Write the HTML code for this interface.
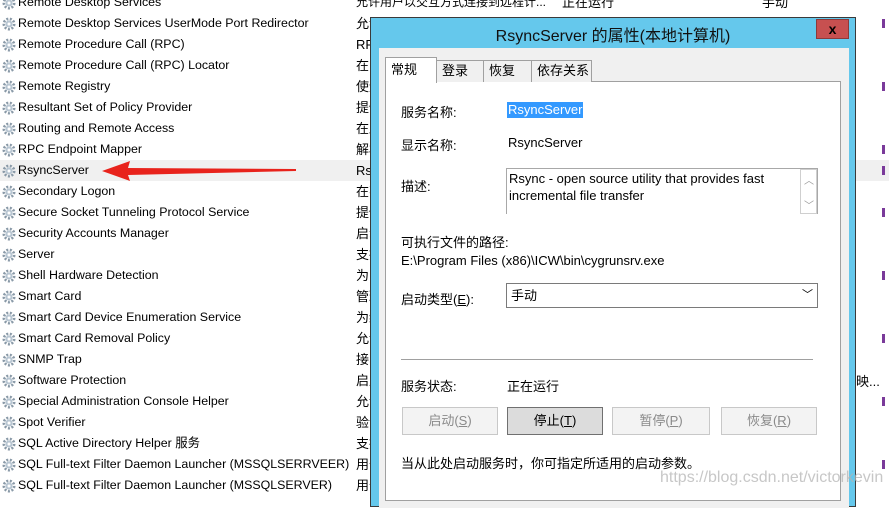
<!DOCTYPE html>
<html><head><meta charset="utf-8"><style>
*{margin:0;padding:0;box-sizing:border-box}
body{width:889px;height:495px;overflow:hidden;background:#fff;position:relative;font-family:"Liberation Sans","Noto Sans CJK SC",sans-serif;font-size:13px;color:#000}
.row{position:absolute;left:0;width:889px;height:21px;line-height:21px;white-space:nowrap}
.row .ic{position:absolute;left:2px;top:4px;width:14px;height:14px}
.row .n{position:absolute;left:18px;font-size:12.4px}
.row .d{position:absolute;left:356px;width:14px;overflow:hidden}
.row .m{position:absolute;left:882px;top:6px;width:3px;height:9px;background:#7a3a9a}
.hl{background:#f0f0f0}
.a{position:absolute}
.dlg{position:absolute;left:370px;top:17px;width:486px;height:490px;background:#65c8ec;border:1px solid #3a3a3a}
.inner{position:absolute;left:8px;top:30px;width:470px;height:460px;background:#f0f0f0}
.title{position:absolute;left:0;top:4px;width:100%;text-align:center;font-size:16px;color:#111}
.close{position:absolute;right:6px;top:1px;width:33px;height:20px;background:#c75050;border:1px solid #8c3a3a;color:#000;font-weight:bold;text-align:center;line-height:18px;font-size:14px}
.tab{position:absolute;top:60px;height:22px;background:#f0f0f0;border:1px solid #a0a0a0;border-bottom:none;font-size:13px;line-height:20px;padding-left:5px}
.btn{position:absolute;top:407px;height:28px;border:1px solid #c8c8c8;background:#f3f3f3;color:#8a8a8a;text-align:center;line-height:26px;font-size:13px}
</style></head><body>

<div id="list"></div>
<script>
var rows=[["Remote Desktop Services",""],["Remote Desktop Services UserMode Port Redirector","允许"],["Remote Procedure Call (RPC)","RPC"],["Remote Procedure Call (RPC) Locator","在 W"],["Remote Registry","使远"],["Resultant Set of Policy Provider","提供"],["Routing and Remote Access","在局"],["RPC Endpoint Mapper","解析"],["RsyncServer","Rsy"],["Secondary Logon","在不"],["Secure Socket Tunneling Protocol Service","提供"],["Security Accounts Manager","启动"],["Server","支持"],["Shell Hardware Detection","为自"],["Smart Card","管理"],["Smart Card Device Enumeration Service","为给"],["Smart Card Removal Policy","允许"],["SNMP Trap","接收"],["Software Protection","启用"],["Special Administration Console Helper","允许"],["Spot Verifier","验证"],["SQL Active Directory Helper 服务","支持"],["SQL Full-text Filter Daemon Launcher (MSSQLSERRVEER)","用于"],["SQL Full-text Filter Daemon Launcher (MSSQLSERVER)","用于"]];
var gear='<svg class="ic" viewBox="0 0 14 14"><circle cx="7" cy="7" r="5.2" fill="none" stroke="#8a9aa8" stroke-width="2.6" stroke-dasharray="2 1.6"/><circle cx="7" cy="7" r="3.6" fill="#b8c6d2"/><circle cx="7" cy="7" r="1.5" fill="#fff"/></svg>';
var h='';
for(var i=0;i<rows.length;i++){var y=-8+21*i;var m=(i%3==1||i==8)?'<span class="m"></span>':'';
h+='<div class="row'+(i==8?' hl':'')+'" style="top:'+y+'px">'+gear+'<span class="n">'+rows[i][0]+'</span><span class="d">'+rows[i][1]+'</span>'+m+'</div>';}
document.getElementById('list').innerHTML=h;
</script>
<div class="a" style="left:356px;top:-8px;line-height:21px;font-size:12px;width:190px;overflow:hidden;white-space:nowrap">允许用户以交互方式连接到远程计...</div>
<div class="a" style="left:562px;top:-8px;line-height:21px">正在运行</div>
<div class="a" style="left:762px;top:-8px;line-height:21px">手动</div>
<div class="a" style="left:856px;top:371px;line-height:21px">映...</div>

<svg class="a" style="left:100px;top:160px" width="200" height="22" viewBox="0 0 200 22">
<polygon points="2,11 30,1 28,8 196,9 196,11 28,15 30,21" fill="#e8231c"/>
</svg>

<div class="dlg">
 <div class="title">RsyncServer 的属性(本地计算机)</div>
 <div class="close">x</div>
 <div class="inner"></div>
</div>
<div class="a" style="left:385px;top:81px;width:456px;height:420px;background:#fff;border:1px solid #a0a0a0"></div>
<div class="tab" style="left:436px;width:48px">登录</div>
<div class="tab" style="left:483px;width:49px">恢复</div>
<div class="tab" style="left:531px;width:61px">依存关系</div>
<div class="tab" style="left:385px;top:57px;height:26px;width:52px;background:#fff;padding-top:2px">常规</div>

<div class="a" style="left:401px;top:102px">服务名称:</div>
<div class="a" style="left:507px;top:102px;background:#3399ff;color:#fff;padding:0 1px;line-height:16px">RsyncServer</div>
<div class="a" style="left:401px;top:135px">显示名称:</div>
<div class="a" style="left:508px;top:135px">RsyncServer</div>
<div class="a" style="left:401px;top:176px">描述:</div>
<div class="a" style="left:506px;top:168px;width:312px;height:46px;border:1px solid #a8a8a8;border-bottom:none"></div>
<div class="a" style="left:509px;top:170px;line-height:17px;width:290px">Rsync - open source utility that provides fast incremental file transfer</div>
<div class="a" style="left:800px;top:169px;width:17px;height:45px;border:1px solid #cfcfcf;background:#fff"></div>
<div class="a" style="left:804px;top:172px;color:#999;font-size:10px">︿</div>
<div class="a" style="left:804px;top:197px;color:#999;font-size:10px">﹀</div>
<div class="a" style="left:401px;top:232px">可执行文件的路径:</div>
<div class="a" style="left:401px;top:253px">E:\Program Files (x86)\ICW\bin\cygrunsrv.exe</div>
<div class="a" style="left:401px;top:289px">启动类型(<u>E</u>):</div>
<div class="a" style="left:506px;top:283px;width:312px;height:25px;border:1px solid #7a7a7a;background:#fff;padding-left:4px;line-height:23px">手动<span style="position:absolute;right:4px;top:0;font-size:11px">﹀</span></div>
<div class="a" style="left:401px;top:359px;width:412px;height:1px;background:#a0a0a0"></div>
<div class="a" style="left:401px;top:376px">服务状态:</div>
<div class="a" style="left:507px;top:376px">正在运行</div>
<div class="btn" style="left:402px;width:96px">启动(<u>S</u>)</div>
<div class="btn" style="left:507px;width:96px;background:#dcdcdc;border-color:#707070;color:#000">停止(<u>T</u>)</div>
<div class="btn" style="left:612px;width:98px">暂停(<u>P</u>)</div>
<div class="btn" style="left:721px;width:96px">恢复(<u>R</u>)</div>
<div class="a" style="left:401px;top:453px">当从此处启动服务时，你可指定所适用的启动参数。</div>
<div class="a" style="left:660px;top:469px;color:rgba(180,180,180,0.75);font-size:16px;white-space:nowrap">https://blog.csdn.net/victorkevin</div>
</body></html>
